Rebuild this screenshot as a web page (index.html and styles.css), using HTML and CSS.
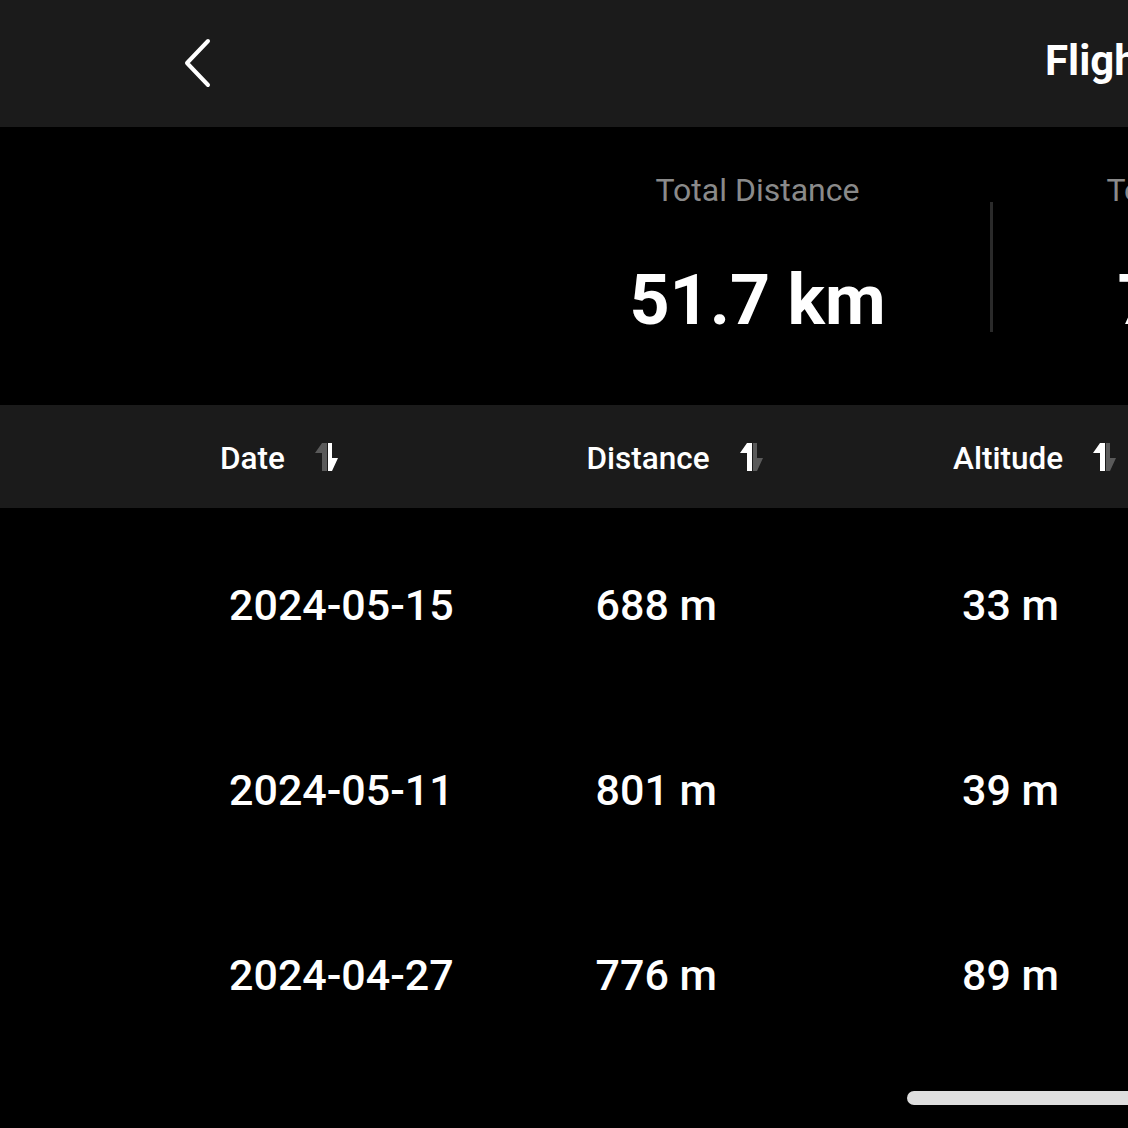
FILE: index.html
```html
<!DOCTYPE html>
<html lang="en">
<head>
  <meta charset="UTF-8" />
  <meta name="viewport" content="width=device-width, initial-scale=1.0"/>
  <title>Flight Records</title>
  <link rel="stylesheet" href="styles.css">
</head>
<body>

<div class="page">

  <!-- top bar -->
  <div class="topbar">
    <svg class="back" viewBox="0 0 28 50" width="28" height="50">
      <polyline points="24,3 3,25 24,47" fill="none" stroke="#fff" stroke-width="4" stroke-linecap="round" stroke-linejoin="round"/>
    </svg>
    <div class="title">Flight Records</div>
  </div>

  <!-- summary -->
  <div class="summary">
    <div class="stat">
      <div class="stat-label">Total Distance</div>
      <div class="stat-value">51.7 km</div>
    </div>
    <div class="divider"></div>
    <div class="stat">
      <div class="stat-label">Total Flight Time</div>
      <div class="stat-value">70 min</div>
    </div>
  </div>

  <!-- table head -->
  <div class="thead">
    <div class="th">
      <span>Date</span>
      <svg class="sort" viewBox="0 0 24 28" width="24" height="28">
        <polygon points="7,0 12,0 12,28 7,28 7,10 0,10" fill="#5a5a5a"/>
        <polygon points="13,0 17,0 17,15 23,15 17,28 13,28" fill="#fff"/>
      </svg>
    </div>
    <div class="th">
      <span>Distance</span>
      <svg class="sort" viewBox="0 0 24 28" width="24" height="28">
        <polygon points="7,0 12,0 12,28 7,28 7,10 0,10" fill="#fff"/>
        <polygon points="13,0 17,0 17,15 23,15 17,28 13,28" fill="#5a5a5a"/>
      </svg>
    </div>
    <div class="th">
      <span>Altitude</span>
      <svg class="sort" viewBox="0 0 24 28" width="24" height="28">
        <polygon points="7,0 12,0 12,28 7,28 7,10 0,10" fill="#fff"/>
        <polygon points="13,0 17,0 17,15 23,15 17,28 13,28" fill="#5a5a5a"/>
      </svg>
    </div>
  </div>

  <!-- rows -->
  <div class="rows">
    <div class="row">
      <div class="td">2024-05-15</div>
      <div class="td">688 m</div>
      <div class="td">33 m</div>
    </div>
    <div class="row">
      <div class="td">2024-05-11</div>
      <div class="td">801 m</div>
      <div class="td">39 m</div>
    </div>
    <div class="row">
      <div class="td">2024-04-27</div>
      <div class="td">776 m</div>
      <div class="td">89 m</div>
    </div>
  </div>

  <div class="scroll-track">
    <div class="scroll-thumb"></div>
  </div>

</div>

</body>
</html>
```

FILE: styles.css
```css
body {
  margin: 0;
  background: #000;
  font-family: Roboto, "Noto Sans", sans-serif;
  color: #fff;
  overflow: hidden;
}

.page {
  width: 1600px;
  height: 1128px;
  overflow: hidden;
}

.topbar {
  height: 127px;
  background: #1b1b1b;
  display: flex;
  align-items: center;
  padding-left: 184px;
}

.back {
  display: block;
  margin-top: -2px;
}

.title {
  margin-left: 833px;
  font-size: 42px;
  font-weight: 700;
  margin-top: -6px;
  white-space: nowrap;
}

.summary {
  height: 278px;
  display: flex;
  align-items: flex-start;
  padding-left: 525px;
}

.stat {
  width: 465px;
  height: 278px;
  display: flex;
  flex-direction: column;
  align-items: center;
}

.stat-label {
  margin-top: 44px;
  font-size: 32px;
  color: #8a8a8a;
  white-space: nowrap;
}

.stat-value {
  margin-top: 50px;
  font-size: 70px;
  font-weight: 700;
  white-space: nowrap;
}

.divider {
  width: 3px;
  height: 130px;
  background: #2a2a2a;
  margin-top: 75px;
}

.thead {
  height: 103px;
  background: #1b1b1b;
  display: flex;
  align-items: center;
  padding-left: 220px;
}

.th {
  width: 366.5px;
  display: flex;
  align-items: center;
  font-size: 31.5px;
  font-weight: 500;
  margin-top: 4px;
}

.sort {
  display: block;
  margin-left: 30px;
  margin-top: -4px;
}

.row {
  height: 185px;
  display: flex;
  align-items: center;
  padding-left: 229px;
}

.td {
  width: 366.5px;
  font-size: 43px;
  font-weight: 500;
  margin-top: 8px;
}

.scroll-track {
  padding-top: 28px;
  padding-left: 907px;
}

.scroll-thumb {
  width: 500px;
  height: 14px;
  border-radius: 7px;
  background: #dedede;
}
```
